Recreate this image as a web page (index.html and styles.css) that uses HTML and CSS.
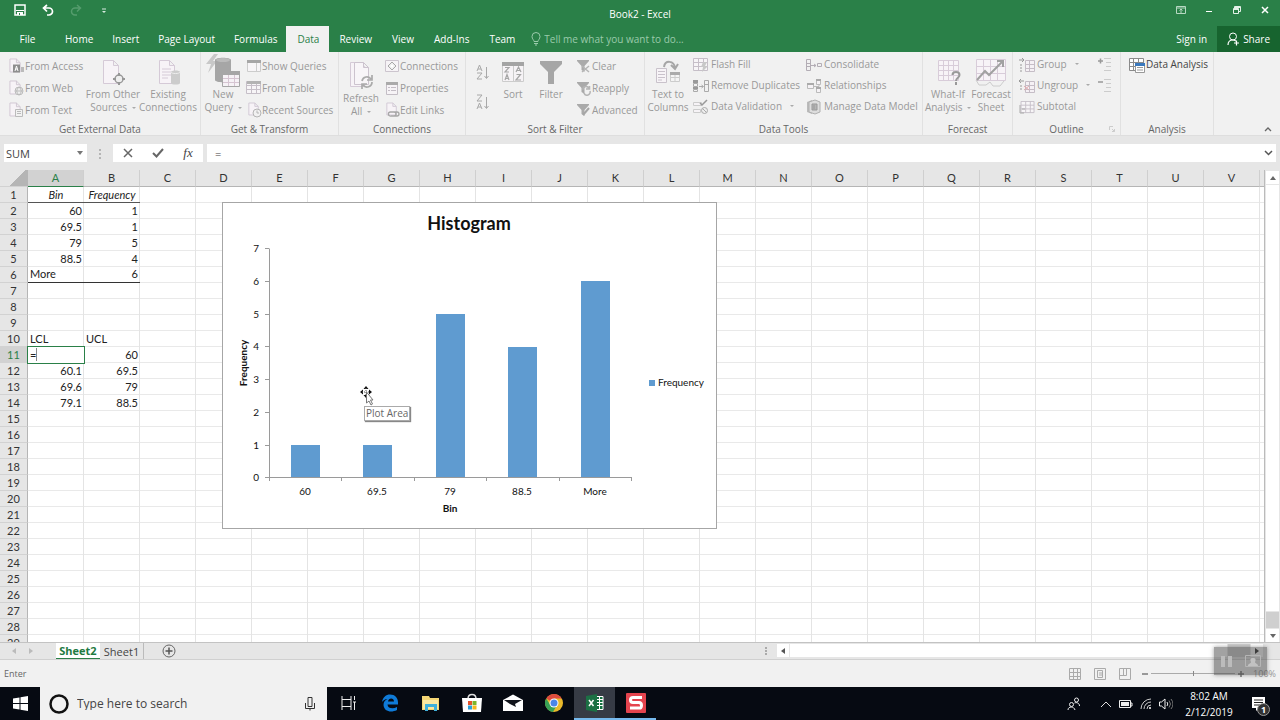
FILE: index.html
```html
<!DOCTYPE html>
<html lang="en">
<head>
<meta charset="utf-8">
<title>Book2 - Excel</title>
<link rel="stylesheet" href="styles.css">
</head>
<body>
<svg class="defs" aria-hidden="true">
  <symbol id="page" viewBox="0 0 14 16"><path d="M1 1h7l4 4v10H1zM8 1v4h4" fill="#f7f3f7" stroke="#cfc6d2"/></symbol>
  <symbol id="funnel" viewBox="0 0 12 13"><path d="M0 0h12v1L7.500 6v6l-3-2V6L0 1z" fill="#aaa"/></symbol>
  <symbol id="grid" viewBox="0 0 16 14"><path d="M.5.500h14v12H.5zM.5 4.500h14M.5 8.500h14M5.500.5v12M10.500.5v12" fill="#f7f5f7" stroke="#c6bfc8"/></symbol>
</svg>

<header class="top">
  <div class="titlebar">
    <div class="quick">
      <button aria-label="Save"><svg width="12" height="12" viewBox="0 0 12 12"><path d="M1 1h10v10H1z" fill="none" stroke="#fff" stroke-width="1.500"/><path d="M2 6h8v1H2zM3 8h6v3H3z" fill="#fff"/><path d="M5 9h1v2H5z" fill="#2a8048"/></svg></button>
      <button aria-label="Undo"><svg width="12" height="12" viewBox="0 0 12 12"><path d="M5 1 1.500 4 5 7.500M2 4h5a3.500 3.500 0 0 1 0 7H5" fill="none" stroke="#fff" stroke-width="1.700"/></svg></button>
      <button aria-label="Redo"><svg width="12" height="12" viewBox="0 0 12 12"><path d="M7 1l3.500 3L7 7.500M10 4H5a3.500 3.500 0 0 0 0 7h2" fill="none" stroke="#559c6d" stroke-width="1.500"/></svg></button>
      <button aria-label="Customize"><svg width="12" height="12" viewBox="0 0 12 12"><path d="M4 4.500h4v1H4zM4 7h4L6 9z" fill="#d8eadf"/></svg></button>
    </div>
    <h1 class="doc-title">Book2 - Excel</h1>
    <div class="window">
      <button aria-label="Ribbon options"><svg width="10" height="10" viewBox="0 0 10 10"><path d="M.5 1.500h9v7h-9zM.5 3h9M5 8V4M3.500 5.500 5 4l1.500 1.500" fill="none" stroke="#b7d8c2"/></svg></button>
      <button aria-label="Minimize"><svg width="10" height="10" viewBox="0 0 10 10"><path d="M2 6h6v1H2z" fill="#fff"/></svg></button>
      <button aria-label="Restore"><svg width="10" height="10" viewBox="0 0 10 10"><path d="M2.500 3V1.500h6v5H7M1.500 3.500h5v5h-5zM2 4.500h5M3 2.500h6" fill="none" stroke="#e4f1e8"/></svg></button>
      <button aria-label="Close"><svg width="10" height="10" viewBox="0 0 10 10"><path d="M2 2l6 6M8 2 2 8" stroke="#fff" stroke-width="1.500"/></svg></button>
    </div>
  </div>
  <nav class="tabs">
    <button class="file">File</button><button>Home</button><button>Insert</button><button>Page Layout</button><button>Formulas</button><button class="active">Data</button><button>Review</button><button>View</button><button>Add-Ins</button><button>Team</button>
    <label class="tell"><svg width="10" height="14" viewBox="0 0 10 14"><path d="M3 9.500C3 8 1 7 1 4.500a4 4 0 0 1 8 0C9 7 7 8 7 9.500zM3 11.500h4M4 13h2" fill="none" stroke="#9acaab"/></svg><input placeholder="Tell me what you want to do..."></label>
    <button class="signin">Sign in</button>
    <button class="share"><svg width="13" height="14" viewBox="0 0 13 14"><circle cx="6" cy="4.500" r="3.500" fill="none" stroke="#fff"/><path d="M1 13c0-3 2-5 5-5 1 0 2 .5 3 1M7 11h5M9.500 8.500v5" fill="none" stroke="#fff" stroke-width="1.200"/></svg>Share</button>
  </nav>
</header>

<section class="ribbon" aria-label="Data">
  <div class="group g-ext">
    <div class="tools">
      <div class="stack">
        <button><svg width="16" height="16"><use href="#page" width="13" height="15"/><path d="M4 6.500h7v8H4z" fill="#8e8e8e"/><path d="M6 13l1.500-5L9 13M6.500 11h2" stroke="#fff" fill="none"/><path d="M12 9h3v5h-3z" fill="#bbb"/></svg>From Access</button>
        <button><svg width="16" height="16"><use href="#page" width="13" height="15"/><circle cx="10" cy="11" r="4" fill="#eee" stroke="#bbb"/><path d="M6 11h8M10 7c-3 3-3 5 0 8M10 7c3 3 3 5 0 8" fill="none" stroke="#bbb"/></svg>From Web</button>
        <button><svg width="16" height="16"><use href="#page" width="13" height="15"/><path d="M6.500 7.500h7v7h-7zM8 9.500h4M8 11.500h4" fill="#f2f2f2" stroke="#bbb"/></svg>From Text</button>
      </div>
      <button class="big w-54"><svg width="26" height="28" viewBox="0 0 26 28"><path d="M3.500 1.500h10l5 5v18h-15zM13.500 1.500v5h5" fill="#f7f3f7" stroke="#d5cad7"/><circle cx="19" cy="20" r="4" fill="#eee" stroke="#979797" stroke-width="1.500"/><path d="M19 14v3M19 23v3M13 20h3M22 20h3" stroke="#979797" stroke-width="2"/></svg><span>From Other<br>Sources <i></i></span></button>
      <button class="big w-56"><svg width="26" height="28" viewBox="0 0 26 28"><path d="M4.500 1.500h10l5 5v18h-15zM14.500 1.500v5h5M7 10h9M7 13h9M7 16h9M7 19h6" fill="#f7f3f7" stroke="#d5cad7"/><path d="M16 13c0-2 9-2 9 0v11c0 2-9 2-9 0z" fill="#ccc"/><path d="M16 13c0 2 9 2 9 0" fill="none" stroke="#eee"/></svg><span>Existing<br>Connections</span></button>
    </div>
    <h2>Get External Data</h2>
  </div>
  <div class="group g-get">
    <div class="tools">
      <button class="big w-38"><svg width="36" height="34" viewBox="0 0 36 34" class="tall"><path d="M9 0 1 10h5l-3 9 9-12H8l5-7z" fill="#c8c8c8"/><path d="M10 6c0-3 16-3 16 0v20c0 3-16 3-16 0z" fill="#a6a6a6"/><ellipse cx="18" cy="6" rx="7" ry="2" fill="#bbb"/><path d="M17.500 17.500h17v15h-17z" fill="#f6f2f6" stroke="#a6a6a6"/><path d="M17 17h18v4H17z" fill="#a6a6a6"/><path d="M18 24.500h16M18 28.500h16M23.500 21v11M29.500 21v11" stroke="#d6c5d2"/></svg><span>New<br>Query <i></i></span></button>
      <div class="stack">
        <button><svg width="16" height="16"><path d="M1.500 2.500h13v11h-13zM10.500 5v8" fill="#f7f5f7" stroke="#ccc"/><path d="M1 2h14v3H1z" fill="#a6a6a6"/></svg>Show Queries</button>
        <button><svg width="16" height="16"><use href="#grid" y="1" width="16" height="14"/><path d="M1 1h14v3H1z" fill="#b3b3b3"/></svg>From Table</button>
        <button><svg width="16" height="16"><use href="#page" x="2" width="12" height="14"/><circle cx="11" cy="11" r="4" fill="#f1f1f1" stroke="#b5b5b5"/><path d="M11 8.500V11h2" fill="none" stroke="#b5b5b5"/></svg>Recent Sources</button>
      </div>
    </div>
    <h2>Get &amp; Transform</h2>
  </div>
  <div class="group g-con">
    <div class="tools">
      <button class="big w-40 low"><svg width="26" height="28" viewBox="0 0 26 28"><path d="M2.500 1.500h10l4 4v20h-14z" fill="#f7f3f7" stroke="#d5cad7"/><path d="M6.500 1.500h9l5 5v17h-14zM15.500 1.500v5h5" fill="#f8f5f8" stroke="#ccc3ce"/><path d="M14 20a5 5 0 0 1 9-2M24 21a5 5 0 0 1-9 3M24 14v5h-5M14 28v-5h5" fill="none" stroke="#aaa" stroke-width="1.700"/></svg><span>Refresh<br>All <i></i></span></button>
      <div class="stack">
        <button><svg width="16" height="16"><path d="M1.500 2.500h13v11h-13z" fill="#f6f3f6" stroke="#ccc5ce"/><path d="M8 4l4 4-4 4-4-4z" fill="#eee" stroke="#a8a8a8"/><circle cx="8" cy="8" r="1.500" fill="#fff"/></svg>Connections</button>
        <button><svg width="16" height="16"><path d="M2.500 2.500h11v12h-11zM4 7.500h2M7 7.500h5M4 10.500h2M7 10.500h5" fill="#f6f3f6" stroke="#c3bdc5"/><path d="M2 2h12v3H2z" fill="#aaa"/></svg>Properties</button>
        <button><svg width="16" height="16"><use href="#page" x="2" width="12" height="14"/><path d="M6 10h4a2 2 0 0 1 0 4H7a2 2 0 0 1-1-4M10 10h3a2 2 0 0 1 0 4h-3" fill="none" stroke="#a6a6a6" stroke-width="1.300"/></svg>Edit Links</button>
      </div>
    </div>
    <h2>Connections</h2>
  </div>
  <div class="group g-sort">
    <div class="tools">
      <div class="az">
        <button aria-label="Sort A to Z"><svg width="14" height="18" viewBox="0 0 14 18"><path d="M1 8l2.500-6L6 8M2 6h3M1 10h5l-5 6h5M10.500 4v11M8.500 13l2 2.500 2-2.500" fill="none" stroke="#a8a8a8"/></svg></button>
        <button aria-label="Sort Z to A"><svg width="14" height="18" viewBox="0 0 14 18"><path d="M1 2h5L1 8h5M1 16l2.500-6L6 16M2 14h3M10.500 4v11M8.500 13l2 2.500 2-2.500" fill="none" stroke="#a8a8a8"/></svg></button>
      </div>
      <button class="big w-38"><svg width="24" height="28" viewBox="0 0 24 28"><path d="M1.500 4.500h21v18h-21zM12.500 5v17" fill="#f6f3f6" stroke="#ccc"/><path d="M1 3h22v4H1z" fill="#a4a4a4"/><path d="M4 8.500h4L4 13h4M4 21l2-5.500L8 21M5 19.500h3M15 13l2.500-5L20 13M16 11.500h3M15.500 15.500h4L15 21h5" fill="none" stroke="#a6a6a6" stroke-width="1.200"/></svg><span>Sort</span></button>
      <button class="big w-38"><svg width="24" height="28" viewBox="0 0 24 28"><path d="M1 2h22v3l-8 8v12H9V13L1 5z" fill="#a6a6a6"/></svg><span>Filter</span></button>
      <div class="stack">
        <button><svg width="16" height="16"><use href="#funnel" x="1" y="2" width="12" height="13"/><path d="M6 8l7 6M13 8l-7 6" stroke="#b5b5b5" stroke-width="1.500"/></svg>Clear</button>
        <button><svg width="16" height="16"><use href="#funnel" x="1" y="2" width="12" height="13"/><path d="M7 10a3 3 0 0 1 6-1M14 11a3 3 0 0 1-6 2M13.500 6v3H10" fill="none" stroke="#b5b5b5" stroke-width="1.500"/></svg>Reapply</button>
        <button><svg width="16" height="16"><use href="#funnel" x="1" y="2" width="12" height="13"/><path d="M7 13l6-7" stroke="#a6a6a6" stroke-width="2"/></svg>Advanced</button>
      </div>
    </div>
    <h2>Sort &amp; Filter</h2>
  </div>
  <div class="group g-tools">
    <div class="tools">
      <button class="big w-46"><svg width="26" height="28" viewBox="0 0 26 28"><path d="M1.500 9.500h10v14h-10zM3 12.500h7M3 15.500h7M3 18.500h7M3 21h4" fill="#f7f4f7" stroke="#c9c2cb"/><path d="M15.500 13.500h9v9h-9zM20 14v8M15 18.500h9" fill="#f4f4f4" stroke="#ccc"/><path d="M15 13h10v3H15z" fill="#aaa"/><path d="M9 8c1-7 10-7 11 1M16 6l4 4 3-5" fill="none" stroke="#a6a6a6" stroke-width="2"/></svg><span>Text to<br>Columns</span></button>
      <div class="stack tight">
        <button><svg width="16" height="16"><use href="#grid" y="1" width="16" height="14"/><path d="M10 5h4l-2 4h3l-6 6 1-5H8z" fill="#c8c8c8"/></svg>Flash Fill</button>
        <button><svg width="16" height="16"><path d="M0 2h5v3H0zM0 9h5v2H0z" fill="#999"/><path d="M.5 5.500h4v3h-4zM.5 11.500h4v2h-4zM11.500 2.500h4v11h-4zM11 6.500h5M6 8.500h4M8.500 7l2 1.500-2 1.500" fill="none" stroke="#aaa"/></svg>Remove Duplicates</button>
        <button><svg width="16" height="16"><path d="M.5 3.500h8v3h-8zM.5 10.500h7v3h-7z" fill="#f6f3f6" stroke="#ccc"/><path d="M7 4l2 2 5-5" fill="none" stroke="#999" stroke-width="1.500"/><circle cx="11.500" cy="11.500" r="3" fill="#eee" stroke="#aaa"/><path d="M9.500 9.500l4 4" stroke="#aaa"/></svg>Data Validation <i></i></button>
      </div>
      <div class="stack tight second">
        <button><svg width="16" height="16"><path d="M.5 2.500h4v11h-4zM0 6.500h5M0 9.500h5M11.500 6.500h4v3h-4zM5 8.500h5M8 7l2 1.500-2 1.500" fill="none" stroke="#b3adb5"/></svg>Consolidate</button>
        <button><svg width="16" height="16"><path d="M1.500 5.500h6v5h-6zM10.500 2.500h4v4h-4zM10.500 10.500h4v4h-4zM8 8.500h5v-2" fill="#f5f2f5" stroke="#bbb"/><path d="M1 5h7v2H1zM10 1h5v2h-5zM10 9h5v2h-5z" fill="#aaa"/></svg>Relationships</button>
        <button><svg width="16" height="16"><path d="M1 3l5-2v14l-5-2z" fill="#bbb"/><path d="M3 3l6-2 5 2v10l-5 2-6-2z" fill="#ddd" stroke="#b0b0b0"/><path d="M6 5h5v6H6zM8 6v4" fill="#b5b5b5" stroke="#999"/></svg>Manage Data Model</button>
      </div>
    </div>
    <h2>Data Tools</h2>
  </div>
  <div class="group g-fore">
    <div class="tools">
      <button class="big w-48"><svg width="26" height="28" viewBox="0 0 26 28"><path d="M3.500 1.500h20v20h-20zM3.500 6.500h20M3.500 11.500h20M3.500 16.500h20M8.500 1.500v20M13.500 1.500v20M18.500 1.500v20" fill="#f7f3f7" stroke="#d8ccd9"/><path d="M17.500 16c0-4 7-4 7 0 0 3-3.500 2.500-3.500 6M21 23v3" fill="none" stroke="#999" stroke-width="2"/></svg><span>What-If<br>Analysis <i></i></span></button>
      <button class="big w-38"><svg width="32" height="30" viewBox="0 0 32 30" ><path d="M1.500 1.500h29v21h-29zM1.500 8.500h29M1.500 15.500h29M8.500 1.500v21M15.500 1.500v21M22.500 1.500v21" fill="#f7f3f7" stroke="#d8ccd9"/><path d="M2 22l8-9 4 4 13-13M22 3h6v6" fill="none" stroke="#a1a1a1" stroke-width="2"/><path d="M1 22l3 5h7l4-3 3 4h7l4-5" fill="none" stroke="#ccc"/></svg><span>Forecast<br>Sheet</span></button>
    </div>
    <h2>Forecast</h2>
  </div>
  <div class="group g-out">
    <div class="tools">
      <div class="stack tight">
        <button><svg width="16" height="16"><path d="M6.500 3.500h9v11h-9zM6 7.500h9M6 11.500h9M10.500 3v11" fill="#f5f1f5" stroke="#c5bdc6"/><path d="M0 3h5M3 1l2 2-2 2M1 8h2M1 11h2M1 14h2" fill="none" stroke="#999"/></svg>Group <i></i></button>
        <button><svg width="16" height="16"><path d="M6.500 3.500h9v11h-9zM6 7.500h9M6 11.500h9M10.500 3v11" fill="#f5f1f5" stroke="#c5bdc6"/><path d="M0 3h5M2 1 0 3l2 2M1 8h2M1 11h2" fill="none" stroke="#999"/><path d="M5 8l5 4M10 8l-5 4" stroke="#dfa9ae"/></svg>Ungroup <i></i></button>
        <button><svg width="16" height="16"><use href="#grid" x="1" y="2" width="16" height="13"/><path d="M1 6v8h4M3 10h3" fill="none" stroke="#aaa"/></svg>Subtotal</button>
      </div>
      <div class="detail">
        <button aria-label="Show Detail"><svg width="14" height="16"><path d="M0 5h5M2.500 2.500v5" stroke="#999" stroke-width="1.500"/><path d="M6 2.500h7M8 6.500h5M8 10.500h5M6 14.500h7" stroke="#ccc"/></svg></button>
        <button aria-label="Hide Detail"><svg width="14" height="16"><path d="M0 5h5" stroke="#999" stroke-width="1.500"/><path d="M6 2.500h7M8 6.500h5M8 10.500h5M6 14.500h7" stroke="#ccc"/></svg></button>
      </div>
    </div>
    <h2>Outline</h2>
    <svg class="launch" width="6" height="6"><path d="M.5 4V.500H4M3 3l2.500 2.500M5.500 3v2.500H3" fill="none" stroke="#ccc"/></svg>
  </div>
  <div class="group g-ana">
    <div class="tools">
      <div class="stack tight dark">
        <button><svg width="17" height="16"><path d="M1.500 1.500h14v12h-14zM1.500 5.500h14M1.500 9.500h14M5.500 1.500v12M10.500 1.500v12" fill="#fff" stroke="#8b8b8b"/><path d="M7.500 6.500h9v9h-9zM9 10.500h6M9 13h6" fill="#fff" stroke="#999"/><path d="M7 6h10v3H7z" fill="#3b79bd"/></svg>Data Analysis</button>
      </div>
    </div>
    <h2>Analysis</h2>
  </div>
  <button class="collapse" aria-label="Collapse ribbon"><svg width="8" height="6"><path d="M1 5l3-3 3 3" fill="none" stroke="#666" stroke-width="1.300"/></svg></button>
</section>

<section class="formula-bar">
  <div class="name-box"><input aria-label="Name box" value="SUM"><svg width="6" height="4"><path d="M0 0h6L3 4z" fill="#777"/></svg></div>
  <svg class="dots" width="2" height="10"><path d="M0 0h2v2H0zM0 4h2v2H0zM0 8h2v2H0z" fill="#b5b5b5"/></svg>
  <div class="fx">
    <button aria-label="Cancel"><svg width="12" height="12"><path d="M2 2l8 8M10 2l-8 8" stroke="#666" stroke-width="1.500"/></svg></button>
    <button aria-label="Enter"><svg width="12" height="12"><path d="M1 6l3.500 3.500L11 2" fill="none" stroke="#666" stroke-width="2"/></svg></button>
    <button aria-label="Insert function" class="fx-icon">fx</button>
  </div>
  <div class="formula"><input aria-label="Formula" value="="><svg width="9" height="6"><path d="M1 1l3.500 3.500L8 1" fill="none" stroke="#555" stroke-width="1.500"/></svg></div>
</section>

<main class="workbook">
  <div class="sheet">
    <table>
      <thead><tr><th class="corner"></th><th class="sel">A</th><th>B</th><th>C</th><th>D</th><th>E</th><th>F</th><th>G</th><th>H</th><th>I</th><th>J</th><th>K</th><th>L</th><th>M</th><th>N</th><th>O</th><th>P</th><th>Q</th><th>R</th><th>S</th><th>T</th><th>U</th><th>V</th><th></th></tr></thead>
      <tbody>
        <tr class="cap"><th>1</th><td>Bin</td><td>Frequency</td></tr>
        <tr><th>2</th><td>60</td><td>1</td></tr>
        <tr><th>3</th><td>69.5</td><td>1</td></tr>
        <tr><th>4</th><td>79</td><td>5</td></tr>
        <tr><th>5</th><td>88.5</td><td>4</td></tr>
        <tr class="last"><th>6</th><td class="txt">More</td><td>6</td></tr>
        <tr><th>7</th></tr><tr><th>8</th></tr><tr><th>9</th></tr>
        <tr><th>10</th><td class="txt">LCL</td><td class="txt">UCL</td></tr>
        <tr><th class="sel">11</th><td class="txt editing"><span>=</span></td><td>60</td></tr>
        <tr><th>12</th><td>60.1</td><td>69.5</td></tr>
        <tr><th>13</th><td>69.6</td><td>79</td></tr>
        <tr><th>14</th><td>79.1</td><td>88.5</td></tr>
        <tr><th>15</th></tr><tr><th>16</th></tr><tr><th>17</th></tr><tr><th>18</th></tr><tr><th>19</th></tr><tr><th>20</th></tr><tr><th>21</th></tr><tr><th>22</th></tr><tr><th>23</th></tr><tr><th>24</th></tr><tr><th>25</th></tr><tr><th>26</th></tr><tr><th>27</th></tr><tr><th>28</th></tr><tr><th>29</th></tr>
      </tbody>
    </table>
    <figure class="chart">
      <svg width="493" height="325" viewBox="0 0 493 325" role="img" aria-label="Histogram">
        <text class="c-title" x="246" y="27">Histogram</text>
        <g fill="#5f9bd0"><path d="M68 242h29v33H68zM140 242h29v33h-29zM213 111h29v164h-29zM285 144h29v131h-29zM358 78h29v197h-29z"/><path d="M426 177h6v6h-6z"/></g>
        <path d="M46.500 45.500v229M42 45.500h4M42 78.500h4M42 111.500h4M42 143.500h4M42 176.500h4M42 209.500h4M42 242.500h4M42 274.500h367M46.500 274v4M118.500 274v4M191.500 274v4M263.500 274v4M336.500 274v4M408.500 274v4" fill="none" stroke="#9a9a9a"/>
        <g class="c-y"><text x="36" y="49">7</text><text x="36" y="82">6</text><text x="36" y="115">5</text><text x="36" y="147">4</text><text x="36" y="180">3</text><text x="36" y="213">2</text><text x="36" y="246">1</text><text x="36" y="278">0</text></g>
        <g class="c-x"><text x="82" y="292">60</text><text x="154" y="292">69.5</text><text x="227" y="292">79</text><text x="299" y="292">88.5</text><text x="372" y="292">More</text><text class="bold" x="227" y="309">Bin</text><text class="bold" transform="translate(24 160) rotate(-90)">Frequency</text></g>
        <text x="435" y="183">Frequency</text>
      </svg>
    </figure>
    <svg class="pointer" width="14" height="20" viewBox="0 0 14 20"><path d="M6 0l2.500 3h-5zM6 12 3.500 9h5zM0 6l3-2.500v5zM12 6 9 3.500v5z" fill="#111"/><path d="M6 2v8M2 6h8" stroke="#555" stroke-dasharray="1 1"/><path d="M6.500 6v11l2.500-2 2 4 1.500-1-2-4H13z" fill="#fff" stroke="#777"/></svg>
    <div class="tip" role="tooltip">Plot Area</div>
  </div>
  <div class="vscroll"><button aria-label="Scroll up"><svg width="6" height="4"><path d="M0 4h6L3 0z" fill="#666"/></svg></button><div class="thumb"></div><div class="rest"></div><button aria-label="Scroll down"><svg width="6" height="4"><path d="M0 0h6L3 4z" fill="#666"/></svg></button></div>
</main>

<section class="sheet-tabs">
  <div class="arrows"><svg width="4" height="6"><path d="M4 0v6L0 3z" fill="#bbb"/></svg><svg width="4" height="6"><path d="M0 0v6l4-3z" fill="#bbb"/></svg></div>
  <button class="current">Sheet2</button><button class="other">Sheet1</button>
  <button class="add" aria-label="New sheet"><svg width="14" height="14"><circle cx="7" cy="7" r="6" fill="none" stroke="#666"/><path d="M7 3.500v7M3.500 7h7" stroke="#555" stroke-width="1.500"/></svg></button>
  <svg class="grip" width="2" height="8"><path d="M0 0h2v2H0zM0 3h2v2H0zM0 6h2v2H0z" fill="#aaa"/></svg>
  <div class="hscroll"><button aria-label="Scroll left"><svg width="4" height="6"><path d="M4 0v6L0 3z" fill="#555"/></svg></button><div class="thumb"></div><div class="rest"></div><button aria-label="Scroll right"><svg width="4" height="6"><path d="M0 0v6l4-3z" fill="#333"/></svg></button></div>
</section>

<footer class="status">
  <span>Enter</span>
  <div class="views">
    <button aria-label="Normal"><svg width="12" height="12"><path d="M.5.500h11v11H.5zM.5 4.500h11M.5 8.500h11M4.500.5v11M8.500.5v11" fill="none" stroke="#aaa"/></svg></button>
    <button aria-label="Page Layout"><svg width="12" height="12"><path d="M.5.500h11v11H.5zM3.500 2.500h5v7h-5zM5 5h3M5 7h3" fill="none" stroke="#aaa"/></svg></button>
    <button aria-label="Page Break"><svg width="12" height="12"><path d="M.5.500h11v11H.5zM4.500 1v6.500h3V1M1 7.500h4" fill="none" stroke="#aaa"/></svg></button>
  </div>
  <div class="zoom"><button aria-label="Zoom out"><svg width="6" height="6"><path d="M0 3h6" stroke="#999" stroke-width="2"/></svg></button><input type="range" aria-label="Zoom"><button aria-label="Zoom in"><svg width="6" height="6"><path d="M0 3h6M3 0v6" stroke="#777" stroke-width="1.500"/></svg></button><span>100%</span></div>
</footer>
<div class="recorder"><svg width="12" height="12"><path d="M1 1h4v11H1zM8 1h4v11H8z" fill="#bcbcbc"/></svg><svg width="16" height="12"><path d="M.5.500h15v11H.5z" fill="none" stroke="#b5b5b5"/><path d="M3 11c0-3 3-2 3-4-1-2-1-4 2-4s3 2 2 4c0 2 3 1 3 4z" fill="#c2c2c2"/></svg></div>

<div class="taskbar">
  <button class="start" aria-label="Start"><svg width="15" height="15"><path d="M0 2.500 6.500 1.500V7H0zM7.500 1.300 15 0v7H7.500zM0 8h6.500v5.500L0 12.500zM7.500 8H15v7l-7.500-1.300z" fill="#fff"/></svg></button>
  <label class="search"><svg width="20" height="20"><circle cx="10" cy="10" r="8.500" fill="none" stroke="#111" stroke-width="2.500"/></svg><input placeholder="Type here to search"><svg width="10" height="14"><path d="M3 .5h4v9H3zM.5 6v5.500h9V6M5 11.500v2" fill="none" stroke="#333"/></svg></label>
  <div class="apps">
    <button aria-label="Task View"><svg width="16" height="16"><path d="M1 1v14M10 1v14M1 4.500h9M1 11.500h9M13.500 1v4M13.500 7v8M12 7h3" fill="none" stroke="#eee"/></svg></button>
    <button aria-label="Edge"><svg width="18" height="18"><path d="M1 8C2 3 5 .5 9 .5c5 0 8 3.500 8 8v2H6.500c.2 4 5.500 5 9.500 2.500V16C10 19 3 17.500 2.500 11 2.500 8 4 6 6.500 5 4 5 2 6.500 1 8zm6-.5h6C13 3.500 7.500 3.500 7 7.500z" fill="#0f7bd8"/></svg></button>
    <button aria-label="Files"><svg width="20" height="18"><path d="M1 2h7l1 2h9v12H1z" fill="#f5d775"/><path d="M2 6h15v9H2z" fill="#fbe8a2"/><path d="M4 17v-7h12v7h-3v-4H7v4z" fill="#3fb0dc"/></svg></button>
    <button aria-label="Store"><svg width="20" height="20"><path d="M6 6c0-6 8-6 8 0" fill="none" stroke="#ddd" stroke-width="1.500"/><path d="M0 5h20l-1 14H1z" fill="#fff"/><path d="M6 8h4v4H6z" fill="#e5532c"/><path d="M10.500 8h4v4h-4z" fill="#7cb52b"/><path d="M6 12.500h4v4H6z" fill="#2a9fd9"/><path d="M10.500 12.500h4v4h-4z" fill="#f5b81f"/></svg></button>
    <button aria-label="Mail"><svg width="22" height="18"><path d="M1 6l10-5.500L21 6v11H1z" fill="#fff"/><path d="M2 6h18l-7 4 1 3-6-3z" fill="#10131a"/></svg></button>
    <button aria-label="Chrome"><svg width="20" height="20"><circle cx="10" cy="10" r="9" fill="#e9b92b"/><path d="M10 10 2.200 5.500A9 9 0 0 1 17.800 5.500H10z" fill="#dd4b3e"/><path d="M2.200 5.500A9 9 0 0 0 9 19l4-7-7-.5z" fill="#37a156"/><circle cx="10" cy="10" r="4.500" fill="#fff"/><circle cx="10" cy="10" r="3.500" fill="#4a86e8"/></svg></button>
    <button class="open active" aria-label="Excel"><svg width="20" height="18"><path d="M10 2.500h8v13h-8zM10 5.500h8M10 8.500h8M10 11.500h8M14.500 3v12" fill="#137140" stroke="#fff"/><path d="M1 2l11-2v18L1 16z" fill="#1c7044"/><path d="M4 6l4.500 6M8.500 6 4 12" stroke="#fff" stroke-width="1.500"/></svg></button>
    <button class="open" aria-label="Snagit"><svg width="20" height="20"><rect width="20" height="20" rx="1" fill="#e4444e"/><path d="M16 4.500H7q-2.500 0-2.500 2.500T7 9.500h6q2.500 0 2.500 3T13 15H4" fill="none" stroke="#fff" stroke-width="3"/></svg></button>
  </div>
  <div class="tray">
    <button aria-label="People"><svg width="14" height="14"><circle cx="9.500" cy="3" r="2" fill="none" stroke="#eee"/><circle cx="4.500" cy="7.500" r="2" fill="none" stroke="#eee"/><path d="M1 13c0-4 6-4 7 0M7.500 6c2-1 5 0 5 3" fill="none" stroke="#eee"/></svg></button>
    <button aria-label="Hidden icons"><svg width="12" height="8"><path d="M1 7l5-5 5 5" fill="none" stroke="#ddd"/></svg></button>
    <button aria-label="Battery"><svg width="14" height="10"><path d="M.5 1.500h11v7H.5zM12 4h1v3h-1" fill="none" stroke="#eee"/><path d="M2 3h8v4H2z" fill="#eee"/></svg></button>
    <button aria-label="Network"><svg width="12" height="12"><path d="M1 11A10 10 0 0 1 11 1M4 11a7 7 0 0 1 7-7M7 11a4 4 0 0 1 4-4" fill="none" stroke="#ccc"/><circle cx="10" cy="10" r="1" fill="#fff"/></svg></button>
    <button aria-label="Volume"><svg width="14" height="12"><path d="M.5 4h2L6 1v10L2.500 8h-2zM8 4q1.500 2 0 4" fill="none" stroke="#eee"/><path d="M10 2.500q3 3.500 0 7M12 1q4 5 0 10" fill="none" stroke="#777"/></svg></button>
    <div class="clock"><time>8:02 AM</time><time>2/12/2019</time></div>
    <button class="notes" aria-label="Notifications"><svg width="15" height="14"><path d="M1 0h13v11H8l-3 3v-3H1z" fill="#fff"/><path d="M3 3h9M3 5.500h9M3 8h6" stroke="#222"/></svg><b>1</b></button>
  </div>
</div>
</body>
</html>
```
FILE: styles.css
```css
* { box-sizing: border-box; }
body {
  margin: 0;
  height: 100vh;
  display: flex;
  flex-direction: column;
  overflow: hidden;
  font: 10px/13px "Open Sans", "Noto Sans", sans-serif;
  color: #444;
  background: #e6e6e6;
}
button, input { font: inherit; color: inherit; border: 0; margin: 0; padding: 0; background: none; }
input { min-width: 0; outline: 0; }
button { display: flex; align-items: center; justify-content: center; white-space: nowrap; flex: none; }
svg { flex: none; display: block; }
h1, h2, figure { margin: 0; font: inherit; }
.defs { position: absolute; width: 0; height: 0; }

.top { background: #2a8048; color: #fff; flex: none; }
.titlebar { display: grid; grid-template-columns: 1fr auto 1fr; height: 26px; }
.quick { display: flex; gap: 16px; padding-left: 14px; align-items: flex-start; padding-top: 4px; }
.doc-title { padding-top: 8px; }
.window { display: flex; justify-content: flex-end; gap: 18px; padding: 5px 10px 0 0; align-items: flex-start; }
.tabs { display: flex; height: 26px; }
.tabs button { padding: 0 9px 0 10px; }
.tabs .file { width: 55px; padding: 0; }
.tabs .active { background: #f1f1f1; color: #2a8048; padding: 0 10px 0 11px; }
.tabs .active ~ button { padding: 0 10px; }
.tell { display: flex; align-items: center; gap: 3px; flex: 1; padding-left: 6px; color: #9acaab; }
.tell input { flex: 1; }
.tell input::placeholder { color: #9acaab; opacity: 1; }
.tabs .share { background: #17642f; gap: 3px; }

.ribbon { display: flex; flex: none; height: 84px; background: #f1f1f1; border-bottom: 1px solid #dedede; color: #999; }
.group { display: flex; flex-direction: column; border-right: 1px solid #e1e1e1; position: relative; flex: none; }
.group h2 { text-align: center; color: #666; line-height: 11px; }
.tools { display: flex; height: 72px; align-items: flex-start; }
.stack { padding-top: 3px; display: flex; flex-direction: column; align-items: flex-start; }
.stack button { height: 22px; }
.stack.tight { padding-top: 2px; }
.stack.tight button { height: 21px; gap: 2px; }
.stack.dark { color: #444; }
.stack.dark button { gap: 1px; }
.ribbon i { display: inline-block; border: 2px solid transparent; border-top-color: #aaa; border-bottom: 0; margin: 0 0 2px 2px; }
.tight i { margin-left: 6px; }
.big { flex-direction: column; justify-content: flex-start; padding-top: 6px; }
.big > svg { height: 30px; }
.big .tall { height: 34px; margin: -4px 0 0; }
.low > svg { height: 34px; }
.w-38 { width: 38px; }
.w-40 { width: 40px; }
.w-46 { width: 46px; }
.w-48 { width: 48px; }
.w-54 { width: 54px; }
.w-56 { width: 56px; }
.g-ext { width: 201px; }
.g-ext .tools { padding-left: 9px; }
.g-ext .stack { width: 77px; }
.g-get { width: 138px; }
.g-get .tools { gap: 4px; padding-left: 3px; }
.g-con { width: 127px; }
.g-con .tools { padding-left: 2px; gap: 3px; }
.g-sort { width: 179px; }
.g-sort .tools { padding-left: 6px; }
.az { width: 22px; padding-top: 11px; display: grid; gap: 12px; }
.g-sort .stack { padding-left: 6px; }
.g-tools { width: 278px; }
.g-tools .stack { width: 113px; padding-left: 2px; }
.g-fore { width: 90px; }
.g-fore .tools { padding-left: 1px; }
.g-out { width: 108px; }
.g-out .tools { padding-left: 6px; }
.g-out .stack { flex: 1; }
.detail { padding: 4px 8px 0 0; display: grid; gap: 5px; }
.launch { position: absolute; right: 5px; bottom: 3px; }
.g-ana { width: 93px; }
.g-ana .tools { padding-left: 7px; }
.collapse { margin: auto 8px 3px auto; }

.formula-bar { display: flex; flex: none; height: 34px; padding: 8px 4px; font-size: 11px; }
.name-box { width: 83px; background: #fff; display: flex; align-items: center; padding: 0 4px 0 2px; }
.name-box input { flex: 1; }
.dots { margin: 5px 12px 0 12px; }
.fx { width: 90px; background: #fff; display: flex; }
.fx button { flex: 1; }
.fx .fx-icon { font: italic 13px "Liberation Serif", serif; }
.formula { flex: 1; background: #fff; margin-left: 4px; display: flex; align-items: center; padding: 0 3px 0 8px; }
.formula input { flex: 1; }

.workbook { flex: 1; min-height: 0; display: flex; border-bottom: 1px solid #c3c3c3; }
.sheet {
  flex: 1; min-width: 0; position: relative; overflow: hidden;
  border-right: 1px solid #bbb;
  color: #222;
  font: 11px/14px Lato, sans-serif;
  background:
    repeating-linear-gradient(90deg, transparent 0 55px, #e4e4e4 55px 56px) 28px 0,
    repeating-linear-gradient(transparent 0 15px, #e9e9e9 15px 16px) 0 17px,
    #fff;
}
.sheet table { border-collapse: separate; border-spacing: 0; table-layout: fixed; width: 1316px; }
.sheet th, .sheet td { padding: 0; height: 16px; white-space: nowrap; }
.sheet th { font-weight: 400; background: #e6e6e6; border-right: 1px solid #cfcfcf; color: #333; width: 56px; }
thead th { border-bottom: 1px solid #b5b5b5; }
.sheet thead th { height: 17px; }
.sheet th:first-child { width: 28px; border-bottom: 1px solid #d2d2d2; border-right-color: #b5b5b5; }
.sheet .corner { background: linear-gradient(135deg, #e6e6e6 60%, #b5b5b5 60%); }
.sheet .sel { background: #d2d2d2; color: #2a8048; }
.sheet thead .sel { border-bottom: 1px solid #2a8048; }
.sheet td { text-align: right; padding: 0 2px 1px 0; }
.sheet .txt { text-align: left; padding-left: 2px; }
.cap td { font-style: italic; border-bottom: 1px solid #555; }
.sheet .cap td { text-align: center; padding: 0; }
.last td { border-bottom: 1px solid #333; }
.sheet .editing { outline: 1px solid #2a8048; background: #fff; }
.editing span { border-right: 1px solid #888; }

.chart { position: absolute; left: 222px; top: 32px; background: #fff; border: 1px solid #a6a6a6; }
.chart text { font: 10px Lato, sans-serif; fill: #111; }
.chart .c-title { font-size: 18px; font-weight: 700; text-anchor: middle; }
.chart .c-y text { text-anchor: end; }
.chart .c-x text { text-anchor: middle; }
.chart .bold { font-weight: 700; }
.pointer { position: absolute; left: 360px; top: 216px; }
.tip { position: absolute; left: 364px; top: 236px; background: #fff; border: 1px solid #aaa; box-shadow: 1px 1px 1px #888; font: 10px/13px "Open Sans", sans-serif; padding: 0 1px; color: #666; }

.vscroll { width: 15px; padding: 1px 1px 0; display: flex; flex-direction: column; gap: 1px; }
.vscroll button { background: #fff; height: 13px; }
.thumb { background: #fff; flex: 1; }
.rest { background: #cfcfcf; }
.vscroll .rest { height: 16px; }

.sheet-tabs { display: flex; flex: none; height: 17px; align-items: stretch; font-size: 11px; border-bottom: 1px solid #d0d0d0; }
.arrows { width: 56px; padding-left: 12px; display: flex; gap: 13px; align-items: center; }
.current { background: #fff; color: #1f7a42; font-weight: 700; width: 44px; border-bottom: 1px solid #2a8048; }
.other { width: 44px; border-right: 1px solid #bbb; }
.add { margin-left: 18px; }
.grip { margin: auto 10px auto auto; }
.hscroll { flex: 0 1 486px; margin: 1px 17px 2px 0; display: flex; gap: 1px; }
.hscroll button { width: 12px; background: #fff; }
.hscroll .rest { width: 22px; }

.status { display: flex; flex: none; height: 27px; align-items: center; background: #f1f1f1; padding: 0 4px; font-size: 9px; color: #666; }
.views { display: flex; gap: 13px; margin-left: auto; }
.zoom { display: flex; align-items: center; margin-left: 11px; gap: 3px; color: #999; }
.zoom input { width: 84px; height: 10px; appearance: none; background: linear-gradient(#aaa, #aaa) center / 100% 1px no-repeat; }
.zoom input::-webkit-slider-thumb { appearance: none; width: 1px; height: 5px; background: #888; }
.zoom span { margin-left: 6px; }
.recorder { position: absolute; right: 13px; bottom: 45px; width: 53px; height: 28px; background: rgba(70, 70, 70, .5); box-shadow: 0 0 4px rgba(70, 70, 70, .5); display: flex; align-items: center; justify-content: center; gap: 13px; }

.taskbar { display: flex; flex: none; height: 33px; background: #060a12; color: #fff; }
.start { width: 40px; }
.search { width: 287px; background: #f1f1f1; color: #444; display: flex; align-items: center; gap: 8px; padding: 0 12px 0 9px; font-size: 12px; }
.search input { flex: 1; }
.search input::placeholder { color: #444; opacity: 1; }
.apps { display: flex; padding-left: 1px; }
.apps button { width: 41px; border-bottom: 2px solid transparent; }
.apps .open { border-color: #76b9ed; }
.apps .active { background: #363b45; }
.tray { display: flex; align-items: center; margin-left: auto; gap: 7px; padding-right: 14px; }
.tray button:first-child { margin-right: 12px; }
.clock { display: grid; text-align: center; font-size: 10px; line-height: 16px; width: 58px; }
.notes { position: relative; margin-left: 6px; }
.notes b { position: absolute; left: 6px; top: 6px; width: 13px; height: 13px; border-radius: 50%; border: 1px solid #999; background: #333; font-size: 9px; line-height: 11px; }
```
